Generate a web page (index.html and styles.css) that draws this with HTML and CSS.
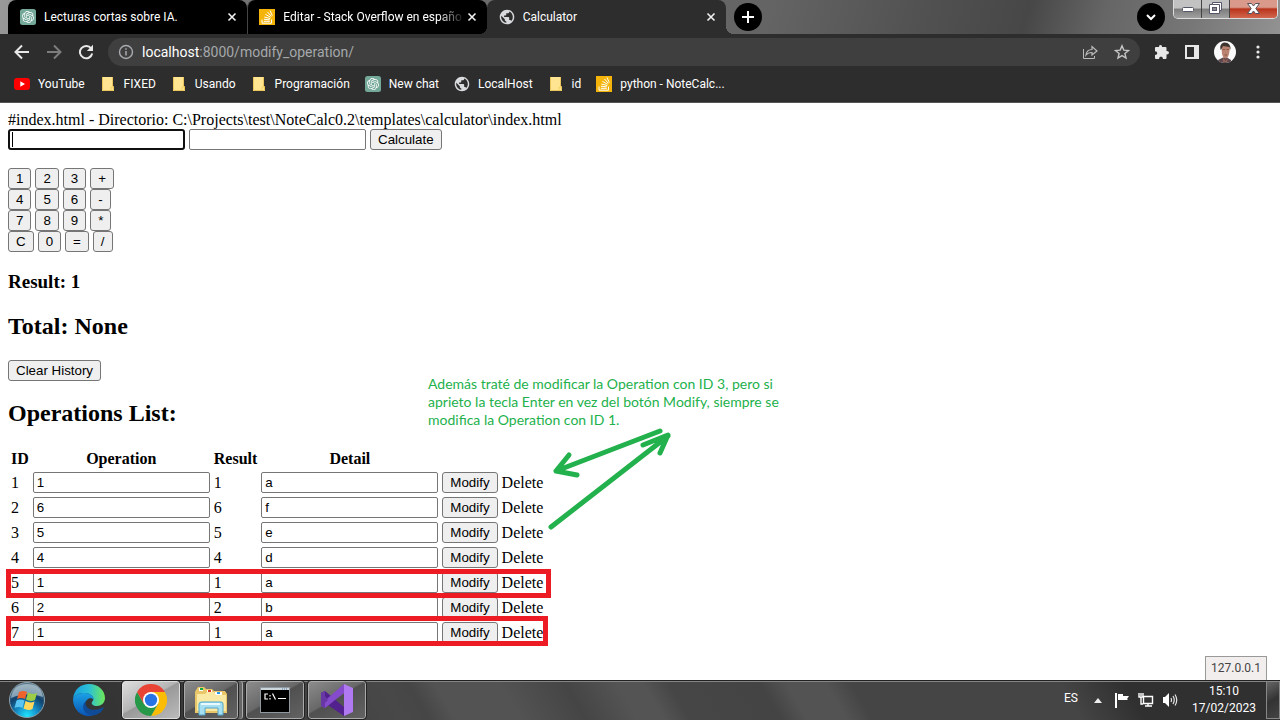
FILE: index.html
```html
<!DOCTYPE html>
<html lang="es">
<head>
<meta charset="utf-8">
<title>Calculator</title>
<link rel="stylesheet" href="styles.css">
</head>
<body>
<svg class="symbols" aria-hidden="true">
  <symbol id="i-gpt" viewBox="0 0 32 32"><rect width="32" height="32" rx="5" fill="#74a899"/><path transform="translate(4 4)" fill="#fff" d="M22.2819 9.8211a5.9847 5.9847 0 0 0-.5157-4.9108 6.0462 6.0462 0 0 0-6.5098-2.9A6.0651 6.0651 0 0 0 4.9807 4.1818a5.9847 5.9847 0 0 0-3.9977 2.9 6.0462 6.0462 0 0 0 .7427 7.0966 5.98 5.98 0 0 0 .511 4.9107 6.051 6.051 0 0 0 6.5146 2.9001A5.9847 5.9847 0 0 0 13.2599 24a6.0557 6.0557 0 0 0 5.7718-4.2058 5.9894 5.9894 0 0 0 3.9977-2.9001 6.0557 6.0557 0 0 0-.7475-7.0729zm-9.022 12.6081a4.4755 4.4755 0 0 1-2.8764-1.0408l.1419-.0804 4.7783-2.7582a.7948.7948 0 0 0 .3927-.6813v-6.7369l2.02 1.1686a.071.071 0 0 1 .038.0615v5.5826a4.504 4.504 0 0 1-4.4945 4.4944zm-9.6607-4.1254a4.4708 4.4708 0 0 1-.5346-3.0137l.142.0852 4.783 2.7582a.7712.7712 0 0 0 .7806 0l5.8428-3.3685v2.3324a.0804.0804 0 0 1-.0332.0615L9.74 19.9502a4.4992 4.4992 0 0 1-6.1408-1.6464zM2.3408 7.8956a4.485 4.485 0 0 1 2.3655-1.9728V11.6a.7664.7664 0 0 0 .3879.6765l5.8144 3.3543-2.0201 1.1685a.0757.0757 0 0 1-.071 0l-4.8303-2.7865A4.504 4.504 0 0 1 2.3408 7.872zm16.5963 3.8558L13.1038 8.364 15.1192 7.2a.0757.0757 0 0 1 .071 0l4.8303 2.7913a4.4944 4.4944 0 0 1-.6765 8.1042v-5.6772a.79.79 0 0 0-.407-.667zm2.0107-3.0231l-.142-.0852-4.7735-2.7818a.7759.7759 0 0 0-.7854 0L9.409 9.2297V6.8974a.0662.0662 0 0 1 .0284-.0615l4.8303-2.7866a4.4992 4.4992 0 0 1 6.6802 4.66zM8.3065 12.863l-2.02-1.1638a.0804.0804 0 0 1-.038-.0567V6.0742a4.4992 4.4992 0 0 1 7.3757-3.4537l-.142.0805L8.704 5.459a.7948.7948 0 0 0-.3927.6813zm1.0976-2.3654l2.602-1.4998 2.6069 1.4998v2.9994l-2.5974 1.4997-2.6067-1.4997Z"/></symbol>
  <symbol id="i-stack" viewBox="0 0 16 16"><rect width="16" height="16" fill="#f4b40a"/><path d="M3 10.5V14.200H12.500V10.500M4.800 12.300H10.800M4.900 10.200L10.900 10.900M5.300 8L11.200 9.500M6.400 5.300L11.700 8.300M8.400 2.900L12.400 7.400M11 1.500L13.300 6.600" fill="none" stroke="#fff" stroke-width="1"/></symbol>
  <symbol id="i-globe" viewBox="1 1 22 22"><path fill="#d8dadd" d="M12 2C6.480 2 2 6.480 2 12s4.480 10 10 10 10-4.480 10-10S17.520 2 12 2zm-1 17.930c-3.950-.49-7-3.850-7-7.930 0-.62.08-1.210.21-1.790L9 15v1c0 1.100.9 2 2 2v1.930zm6.900-2.540c-.26-.81-1-1.390-1.900-1.390h-1v-3c0-.55-.45-1-1-1H8v-2h2c.55 0 1-.45 1-1V7h2c1.100 0 2-.9 2-2v-.410c2.930 1.190 5 4.060 5 7.410 0 2.080-.8 3.970-2.100 5.390z"/></symbol>
  <symbol id="i-folder" viewBox="0 0 16 16"><path d="M2 1H13V10L14 11V15H2Z" fill="#ffe592"/><path d="M2.500 1V14.500H13.500V11L12.500 10V1" fill="none" stroke="#edc65b"/><path d="M11 14.500V11H13.500" fill="none" stroke="#f2d061"/></symbol>
  <symbol id="i-close" viewBox="0 0 10 10"><path d="M1.500 1.500L8.500 8.500M8.500 1.500L1.500 8.500" stroke="#f1f1f1" stroke-width="1.600"/></symbol>
</svg>

<header class="browser">
  <div class="tabstrip">
    <nav class="tabs">
      <div class="tab"><svg class="icon"><use href="#i-gpt"/></svg><span class="tab-title">Lecturas cortas sobre IA.</span><button class="close" aria-label="Cerrar"><svg><use href="#i-close"/></svg></button></div>
      <div class="tab tab-divided"><svg class="icon"><use href="#i-stack"/></svg><span class="tab-title">Editar - Stack Overflow en españo</span><button class="close" aria-label="Cerrar"><svg><use href="#i-close"/></svg></button></div>
      <div class="tab tab-active"><svg class="icon"><use href="#i-globe"/></svg><span class="tab-title">Calculator</span><button class="close" aria-label="Cerrar"><svg><use href="#i-close"/></svg></button></div>
    </nav>
    <button class="round" aria-label="Nueva pestaña"><svg width="14" height="14" viewBox="0 0 14 14"><path d="M7 1V13M1 7H13" stroke="#fff" stroke-width="2"/></svg></button>
    <button class="round tab-search" aria-label="Buscar pestañas"><svg width="10" height="10" viewBox="0 0 10 10"><path d="M1 3L5 7L9 3" fill="none" stroke="#fff" stroke-width="2"/></svg></button>
    <div class="window-buttons">
      <button aria-label="Minimizar"><svg width="12" height="10" viewBox="0 0 12 10"><rect x=".5" y="4.500" width="11" height="4" rx="1" fill="#fff" stroke="#555768"/></svg></button>
      <button aria-label="Restaurar"><svg width="13" height="12" viewBox="0 0 13 12"><path d="M3.500 .5H12.500V8.500H10.500V11.500H.5V2.500H3.500Z" fill="#fff" stroke="#555768"/><path d="M3.500 2.500H10.500V8.500" fill="none" stroke="#555768"/><rect x="3.500" y="5.500" width="4" height="3" fill="#8b8b94" stroke="#555768"/></svg></button>
      <button class="window-close" aria-label="Cerrar ventana"><svg width="13" height="11" viewBox="0 0 13 11"><path d="M.5 .5H4.500L6.500 3L8.500 .5H12.500L8.800 5.500L12.500 10.500H8.500L6.500 8L4.500 10.500H.5L4.200 5.500Z" fill="#fff" stroke="#55525f"/></svg></button>
    </div>
  </div>
  <div class="toolbar">
    <button aria-label="Atrás"><svg width="16" height="16" viewBox="0 0 16 16"><path d="M15 8H2M8 1.500L1.500 8L8 14.500" fill="none" stroke="#e8e8e8" stroke-width="2"/></svg></button>
    <button aria-label="Adelante"><svg width="16" height="16" viewBox="0 0 16 16"><path d="M1 8H14M8 1.500L14.500 8L8 14.500" fill="none" stroke="#7d7d7d" stroke-width="2"/></svg></button>
    <button aria-label="Recargar"><svg width="16" height="16" viewBox="0 0 16 16"><path d="M13.200 4.500A6.200 6.200 0 1 0 14.200 9.500" fill="none" stroke="#e8e8e8" stroke-width="2"/><path d="M15 .8V7H8.800Z" fill="#e8e8e8"/></svg></button>
    <div class="omnibox">
      <svg width="16" height="16" viewBox="0 0 16 16"><circle cx="8" cy="8" r="6.500" fill="none" stroke="#a8abaf" stroke-width="1.400"/><path d="M8 7V11.500M8 4.300V5.800" stroke="#a8abaf" stroke-width="1.500"/></svg>
      <span class="url"><span class="host">localhost</span>:8000/modify_operation/</span>
      <svg width="16" height="16" viewBox="0 0 16 16"><path d="M1.500 5V14.500H12.500V12" fill="none" stroke="#bbb"/><path d="M4 11C4.500 7 7 5.500 10 5.500V2.500L15 7L10 11V8.500C7.500 8.500 5.500 9 4 11Z" fill="none" stroke="#bbb" stroke-width="1.200"/></svg>
      <svg width="16" height="16" viewBox="0 0 16 16"><path d="M8 1.800L9.800 6.100L14.500 6.500L10.900 9.500L12 14L8 11.600L4 14L5.100 9.500L1.500 6.500L6.200 6.100Z" fill="none" stroke="#c5c5c5" stroke-width="1.400"/></svg>
    </div>
    <div class="actions">
      <svg width="16" height="16" viewBox="0 0 16 16"><path d="M1 4Q1 3 2 3H5Q4.600 1 6.500 1T8 3H11.500Q12.500 3 12.500 4V7Q15 6.800 15 8.700T12.500 10.500V14Q12.500 15 11.500 15H9Q9 12.500 7 12.500T5 15H2Q1 15 1 14V11Q3.300 11 3.300 9.200T1 7.300Z" fill="#e8e8e8"/></svg>
      <svg width="16" height="16" viewBox="0 0 16 16"><path d="M1 1H15V15H1ZM3 3V13H10V3Z" fill="#e8e8e8" fill-rule="evenodd"/></svg>
      <svg width="22" height="22" viewBox="0 0 22 22"><defs><clipPath id="face"><circle cx="11" cy="11" r="11"/></clipPath></defs><g clip-path="url(#face)"><rect width="22" height="22" fill="#fafafa"/><path d="M4 22V19L9 16.500H13L17 19V22Z" fill="#5e4850"/><path d="M7.500 7Q7 3 11 3T16 7L15 13Q14 17 11.500 17.500Q9 17 8 13Z" fill="#b98370"/><path d="M6.500 9Q5 3 10 1.500Q17 1 16.500 9L15.500 6L9 5L7.500 8Z" fill="#3c3530"/><path d="M8.500 8.500H11M12.500 8.500H15M10.500 14H13" stroke="#8a5848"/><path d="M9 16.500L11.500 20L14 16.500L13 21H9Z" fill="#936456"/></g></svg>
      <svg width="16" height="16" viewBox="0 0 16 16" fill="#e8e8e8"><circle cx="8" cy="3" r="1.600"/><circle cx="8" cy="8" r="1.600"/><circle cx="8" cy="13" r="1.600"/></svg>
    </div>
  </div>
  <nav class="bookmarks">
    <a href="#"><svg class="icon" viewBox="0 0 16 16"><rect y="2" width="16" height="12" rx="3" fill="#f00"/><path d="M6.300 5.200V10.800L11 8Z" fill="#fff"/></svg>YouTube</a>
    <a href="#"><svg class="icon"><use href="#i-folder"/></svg>FIXED</a>
    <a href="#"><svg class="icon"><use href="#i-folder"/></svg>Usando</a>
    <a href="#"><svg class="icon"><use href="#i-folder"/></svg>Programación</a>
    <a href="#"><svg class="icon"><use href="#i-gpt"/></svg>New chat</a>
    <a href="#"><svg class="icon"><use href="#i-globe"/></svg>LocalHost</a>
    <a href="#"><svg class="icon"><use href="#i-folder"/></svg>id</a>
    <a href="#"><svg class="icon"><use href="#i-stack"/></svg>python - NoteCalc...</a>
  </nav>
</header>

<main class="page">
  <div class="path">#index.html - Directorio: C:\Projects\test\NoteCalc0.2\templates\calculator\index.html</div>
  <form class="line">
    <input class="field field-focus" type="text" aria-label="Operación">
    <input class="field" type="text" aria-label="Detalle">
    <button class="btn" type="button">Calculate</button>
  </form>
  <div class="keypad">
    <div class="line"><button class="btn">1</button><button class="btn">2</button><button class="btn">3</button><button class="btn">+</button></div>
    <div class="line"><button class="btn">4</button><button class="btn">5</button><button class="btn">6</button><button class="btn">-</button></div>
    <div class="line"><button class="btn">7</button><button class="btn">8</button><button class="btn">9</button><button class="btn">*</button></div>
    <div class="line"><button class="btn">C</button><button class="btn">0</button><button class="btn">=</button><button class="btn">/</button></div>
  </div>
  <h3>Result: 1</h3>
  <h2>Total: None</h2>
  <button class="btn">Clear History</button>
  <h2 class="list-title">Operations List:</h2>
  <table class="operations">
    <thead><tr><th>ID</th><th>Operation</th><th>Result</th><th>Detail</th></tr></thead>
    <tbody>
      <tr><td>1</td><td><input class="field" aria-label="Operation 1" value="1"></td><td>1</td><td><input class="field" aria-label="Detail 1" value="a"></td><td><button class="btn">Modify</button></td><td><a href="#">Delete</a></td></tr>
      <tr><td>2</td><td><input class="field" aria-label="Operation 2" value="6"></td><td>6</td><td><input class="field" aria-label="Detail 2" value="f"></td><td><button class="btn">Modify</button></td><td><a href="#">Delete</a></td></tr>
      <tr><td>3</td><td><input class="field" aria-label="Operation 3" value="5"></td><td>5</td><td><input class="field" aria-label="Detail 3" value="e"></td><td><button class="btn">Modify</button></td><td><a href="#">Delete</a></td></tr>
      <tr><td>4</td><td><input class="field" aria-label="Operation 4" value="4"></td><td>4</td><td><input class="field" aria-label="Detail 4" value="d"></td><td><button class="btn">Modify</button></td><td><a href="#">Delete</a></td></tr>
      <tr><td>5</td><td><input class="field" aria-label="Operation 5" value="1"></td><td>1</td><td><input class="field" aria-label="Detail 5" value="a"></td><td><button class="btn">Modify</button></td><td><a href="#">Delete</a></td></tr>
      <tr><td>6</td><td><input class="field" aria-label="Operation 6" value="2"></td><td>2</td><td><input class="field" aria-label="Detail 6" value="b"></td><td><button class="btn">Modify</button></td><td><a href="#">Delete</a></td></tr>
      <tr><td>7</td><td><input class="field" aria-label="Operation 7" value="1"></td><td>1</td><td><input class="field" aria-label="Detail 7" value="a"></td><td><button class="btn">Modify</button></td><td><a href="#">Delete</a></td></tr>
    </tbody>
  </table>

  <div class="mark mark-row5"></div>
  <div class="mark mark-row7"></div>
  <p class="note">Además traté de modificar la Operation con ID 3, pero si<br>aprieto la tecla Enter en vez del botón Modify, siempre se<br>modifica la Operation con ID 1.</p>
  <svg class="arrows" width="130" height="110" viewBox="0 0 130 110"><g fill="none" stroke="#22b14c" stroke-width="5" stroke-linecap="round" stroke-linejoin="round"><path d="M114 6L10 46M23 30L10 46L31 50"/><path d="M5 102L122 11M97 20L122 10L114 28"/></g></svg>
  <div class="status">127.0.0.1</div>
</main>

<footer class="taskbar">
  <button class="launcher" aria-label="Inicio"><svg width="38" height="38" viewBox="0 0 38 38"><defs><radialGradient id="orb" cx=".5" cy=".95" r=".85"><stop offset="0" stop-color="#1fe5ff"/><stop offset=".35" stop-color="#1591cb"/><stop offset=".7" stop-color="#11426d"/><stop offset="1" stop-color="#54748b"/></radialGradient></defs><circle cx="19" cy="19" r="17.500" fill="url(#orb)" stroke="#8ba2ad"/><path d="M3 17Q5 3 19 3T35 16Q20 10 3 17Z" fill="#d6e3e9" opacity=".55"/><path d="M11 11Q15 9 19 11L17 18Q13 16 9 18Z" fill="#f0642c"/><path d="M20 11.500Q24 14 29 12L27 19Q22 21 18 18.500Z" fill="#9ccd45"/><path d="M8.500 19.500Q12 17.500 16.500 19.500L14.500 27Q11 25 6.500 27Z" fill="#5ac5f2"/><path d="M17.500 20Q22 22.500 26.500 20.500L24.500 28Q20 30 15.500 27.500Z" fill="#ffd75b"/></svg></button>
  <button class="launcher launcher-edge" aria-label="Edge"><svg width="32" height="32" viewBox="0 0 32 32"><defs><linearGradient id="e1" x1="0" y1=".4" x2="1" y2=".4"><stop offset="0" stop-color="#179fe0"/><stop offset=".5" stop-color="#2cc0d6"/><stop offset="1" stop-color="#6ee957"/></linearGradient><linearGradient id="e2" x1="0" y1="0" x2="0" y2="1"><stop offset="0" stop-color="#1aa1e5"/><stop offset="1" stop-color="#0a55b5"/></linearGradient></defs><path d="M0 15C1 5 8 0 16 0C26 0 32 7 32 14C32 19 28 22 24 22C20 22 18 20 19 18C23 14 18 9 11 9C6 9 2 11 0 15Z" fill="url(#e1)"/><path d="M0 15C2 11 6 9 11 9C17 9 21 12 20.500 16C19 13 13 14 12 20C11 26 16 31 20 31.500C10 34 0 27 0 15Z" fill="url(#e2)"/><path d="M13 17C11 23 17 29 29 24C31 23 31 24 30 25C28 29 24 31 20 31.500C11 31 7 22 13 17Z" fill="#104b97"/></svg></button>
  <button class="task task-active" aria-label="Chrome"><svg width="32" height="32" viewBox="0 0 32 32"><path d="M16 8H29.860A16 16 0 0 1 16 32L23 20Z" fill="#fbbc05"/><path d="M2.140 8A16 16 0 0 0 16 32L23 20L16 16L9 20Z" fill="#279847"/><path d="M2.140 8L9 20L16 8H29.860A16 16 0 0 0 2.140 8Z" fill="#e94335"/><circle cx="16" cy="16" r="8" fill="#fff"/><circle cx="16" cy="16" r="6.200" fill="#2874e4"/></svg></button>
  <button class="task task-stack" aria-label="Explorador"><svg width="34" height="32" viewBox="0 0 34 32"><path d="M2 6L4 3H10L12 5H18L20 7H31L33 10V29H1V8Z" fill="#e9c667"/><path d="M5 4H9V7H5ZM13 6H18V9H13ZM21 8H28V11H21Z" fill="#fff"/><path d="M6 4H9V6H6Z" fill="#12aa44"/><path d="M14 6H17V8H14Z" fill="#e13c27"/><path d="M23 8H26V10H23Z" fill="#2597e8"/><path d="M3 10H11L13 8H20L22 11H32V27H3Z" fill="#fae9a4"/><path d="M5 20Q5 18 8 18H27Q29 18 29 20V31H24V24H11V31H5Z" fill="#a6def2" stroke="#4fa6ca"/><path d="M7 20H26" stroke="#e9faff" stroke-width="2"/></svg></button>
  <button class="task" aria-label="Símbolo del sistema"><svg width="30" height="26" viewBox="0 0 30 26"><rect x=".5" y=".5" width="29" height="25" fill="#000" stroke="#8f999f"/><path d="M1 1H29V3H1Z" fill="#cad5dc"/><path d="M22 2H28" stroke="#55789c" stroke-dasharray="1 1"/><path d="M8 7H5V12H8M10 8V9.500M10 11V12.500M12.500 6.500L15.500 12.500M18 11.500H26" fill="none" stroke="#fff" stroke-width="1.200"/></svg></button>
  <button class="task" aria-label="Visual Studio"><svg width="32" height="32" viewBox="0 0 32 32"><path d="M0 9L4 7L23 23V32L4 19L0 22Z" fill="#52218d"/><path d="M0 22L4 24L23 9V0L0 20Z" fill="#854bcc"/><path d="M0 9V22L4 24V19L7 16L4 12V7Z" fill="#6837a6"/><path d="M23 0L32 4V28L23 32Z" fill="#b179f1"/></svg></button>
  <div class="tray">
    <span class="lang">ES</span>
    <svg class="tray-arrow" width="8" height="16" viewBox="0 0 8 16"><path d="M4 6L8 11H0Z" fill="#eee"/></svg>
    <svg width="16" height="16" viewBox="0 0 16 16"><path d="M1 1H3V16H1Z" fill="#fff"/><path d="M4 2H9V4H15L13 7L14 8H9V8H4Z" fill="#fff"/></svg>
    <svg width="16" height="16" viewBox="0 0 16 16"><path d="M5.500 4.500H14.500V11.500H5.500Z" fill="#333" stroke="#fff" stroke-width="1.400"/><path d="M7 14H14M10 12V14M3 5V12H5M1 1V5H5V1M3 1V4" fill="none" stroke="#fff" stroke-width="1.400"/></svg>
    <svg width="16" height="16" viewBox="0 0 16 16"><path d="M1 5H3L7 1V15L3 11H1Z" fill="#fff"/><path d="M9 6Q10 8 9 10M11 4Q13.500 8 11 12M13 2.500Q16.500 8 13 13.500" fill="none" stroke="#e6e6e6" stroke-width="1.200"/></svg>
  </div>
  <time class="clock">15:10<br>17/02/2023</time>
  <button class="show-desktop" aria-label="Mostrar escritorio"></button>
</footer>
</body>
</html>
```
FILE: styles.css
```css
* { box-sizing: border-box; }

body {
  margin: 0;
  min-height: 100vh;
  display: flex;
  flex-direction: column;
  font: 16px/18px "Liberation Serif", serif;
  color: #000;
  background: #fff;
}

button { margin: 0; padding: 0; border: 0; background: none; }
svg { display: block; flex: none; }
.symbols { position: absolute; width: 0; height: 0; }
.icon { width: 16px; height: 16px; }

/* Browser frame */
.browser {
  font: 12px/16px Roboto, sans-serif;
  color: #fff;
  background: #2d2d2d;
  border-bottom: 1px solid #555;
}

.tabstrip {
  display: flex;
  height: 34px;
  padding-left: 8px;
  background: linear-gradient(105deg, #999 0, #777 10%, #646464 60%, #515151 72%, #474747 80%, #666 86%, #777 93%, #929292 100%);
}

.tabs { display: flex; width: 718px; }

.tab {
  flex: 1;
  min-width: 0;
  display: flex;
  align-items: center;
  padding: 0 10px 0 12px;
  background: #000;
  border-radius: 8px 8px 0 0;
}

.tab-divided { padding-left: 11px; border-left: 1px solid #444; }
.tab-active { position: relative; background: #2d2d2d; }

/* Curved feet that join the active tab to the toolbar */
.tab-active::before,
.tab-active::after {
  content: "";
  position: absolute;
  bottom: 0;
  width: 8px;
  height: 8px;
}
.tab-active::before { left: -8px; background: radial-gradient(circle at 0 0, transparent 8px, #2d2d2d 8px); }
.tab-active::after { right: -8px; background: radial-gradient(circle at 100% 0, transparent 8px, #2d2d2d 8px); }

.tab-title {
  flex: 1;
  margin-left: 8px;
  overflow: hidden;
  white-space: nowrap;
}

.tab-divided .tab-title {
  -webkit-mask-image: linear-gradient(to right, #000 85%, transparent);
  mask-image: linear-gradient(to right, #000 85%, transparent);
}

.close { margin-left: 2px; }
.close svg { width: 10px; height: 10px; }

.round {
  display: flex;
  align-items: center;
  justify-content: center;
  width: 28px;
  height: 28px;
  margin: 3px 8px;
  border-radius: 50%;
  background: #000;
}

.tab-search { margin-left: auto; }

.window-buttons {
  display: flex;
  height: 19px;
  margin-right: 2px;
  border: 1px solid #ddd;
  border-top: 0;
  border-radius: 0 0 5px 5px;
  overflow: hidden;
}

.window-buttons button {
  display: flex;
  align-items: center;
  justify-content: center;
  width: 28px;
  padding-bottom: 2px;
  border-right: 1px solid #444;
  background: linear-gradient(#c2c2c2 0 45%, #7c7c7c 50%, #a0a0a0);
}

.window-buttons .window-close {
  width: 47px;
  border-right: 0;
  background: linear-gradient(#d99a8b 0 40%, #b9341c 50%, #d2674d);
}

.toolbar {
  display: flex;
  align-items: center;
  height: 36px;
  padding: 0 14px;
  gap: 16px;
}

.omnibox {
  flex: 1;
  display: flex;
  align-items: center;
  gap: 16px;
  height: 28px;
  margin: 0 -2px;
  padding: 0 10px;
  border-radius: 14px;
  background: #3f3f3f;
}

.url { flex: 1; margin-left: -8px; font-size: 14px; color: #a5a8ab; }
.host { color: #fff; }
.actions { display: flex; align-items: center; gap: 14px; }

.bookmarks {
  display: flex;
  align-items: center;
  gap: 15px;
  height: 32px;
  padding: 0 14px 4px;
}

.bookmarks a {
  display: flex;
  align-items: center;
  gap: 8px;
  color: #fff;
  white-space: nowrap;
  text-decoration: none;
}

/* Calculator page */
.page { position: relative; flex: 1; padding: 8px; }
.line { display: flex; gap: 4px; }
.keypad { margin-top: 18px; }

.field {
  display: block;
  width: 177px;
  height: 21px;
  padding: 1px 3px;
  border: 1px solid #767676;
  border-radius: 2px;
  background: #fff;
  font-family: "Liberation Sans", sans-serif;
  color: #000;
}

.field-focus {
  border: 2px solid #101010;
  border-radius: 3px;
  background: #fff linear-gradient(#000, #000) 2px 1px / 1px 15px no-repeat;
}

.btn {
  display: block;
  height: 21px;
  padding: 1px 7px;
  border: 1px solid #767676;
  border-radius: 3px;
  background: #efefef;
  font-family: "Liberation Sans", sans-serif;
  color: #000;
}

h2 { margin: 20px 0; font-size: 24px; line-height: 27px; }
h3 { margin: 19px 0; font-size: 19px; line-height: 22px; }
.list-title { margin-top: 19px; }

.operations { border-spacing: 2px; }
.operations th, .operations td { padding: 1px; }
.operations a { color: #000; text-decoration: none; }

/* Hand-drawn annotations laid over the page */
.mark { position: absolute; left: 6px; border: 5px solid #ed1c24; }
.mark-row5 { top: 466px; width: 545px; height: 29px; }
.mark-row7 { top: 513px; width: 542px; height: 30px; }

.note {
  position: absolute;
  left: 428px;
  top: 272px;
  margin: 0;
  font: 14px/18px Lato, sans-serif;
  color: #22b14c;
  white-space: nowrap;
}

.arrows { position: absolute; left: 546px; top: 322px; }

.status {
  position: absolute;
  right: 13px;
  bottom: 0;
  padding: 3px 5px;
  border: 1px solid #999;
  border-bottom: 0;
  background: #f2eeee;
  font: 12px/17px Roboto, sans-serif;
  color: #444;
}

/* Taskbar */
.taskbar {
  display: flex;
  align-items: center;
  height: 40px;
  padding: 0 0 1px 8px;
  border-top: 1px solid #222;
  box-shadow: inset 0 1px #858585;
  background: linear-gradient(60deg, #343434 0, #343434 9%, #484848 31%, #464646 33%, #535353 35%, #535353 40%, #454545 45%, #545454 49%, #545454 51%, #464646 53%, #444 60%, #535353 62%, #535353 65%, #454545 67%, #454545 83%, #303030 88%, #303030 100%);
}

.launcher-edge { margin: 0 17px 0 27px; }

.task {
  display: flex;
  align-items: center;
  justify-content: center;
  width: 58px;
  height: 38px;
  margin-right: 4px;
  border: 1px solid #aaa;
  border-radius: 3px;
  outline: 1px solid #222;
  background: linear-gradient(150deg, #8c8c8c 0, #686868 45%, #505050 48%, #626262 100%);
}

.task-active { background: linear-gradient(150deg, #ddd 0, #b5b5b5 45%, #999 48%, #bbb 100%); border-color: #ddd; }
.task-stack { width: 54px; margin-right: 8px; box-shadow: 4px 0 #666, 5px 0 #aaa; }

.tray {
  display: flex;
  align-items: center;
  gap: 8px;
  margin-left: auto;
  font: 12px/16px Roboto, sans-serif;
  color: #fff;
}

.lang { margin: 0 8px 4px 0; }
.tray-arrow { margin-right: 4px; }

.clock {
  width: 84px;
  margin-left: 4px;
  font: 12px/17px Roboto, sans-serif;
  color: #fff;
  text-align: center;
}

.show-desktop {
  align-self: stretch;
  width: 14px;
  border: 1px solid #888;
  background: linear-gradient(150deg, #666, #333 50%, #444);
}
```
